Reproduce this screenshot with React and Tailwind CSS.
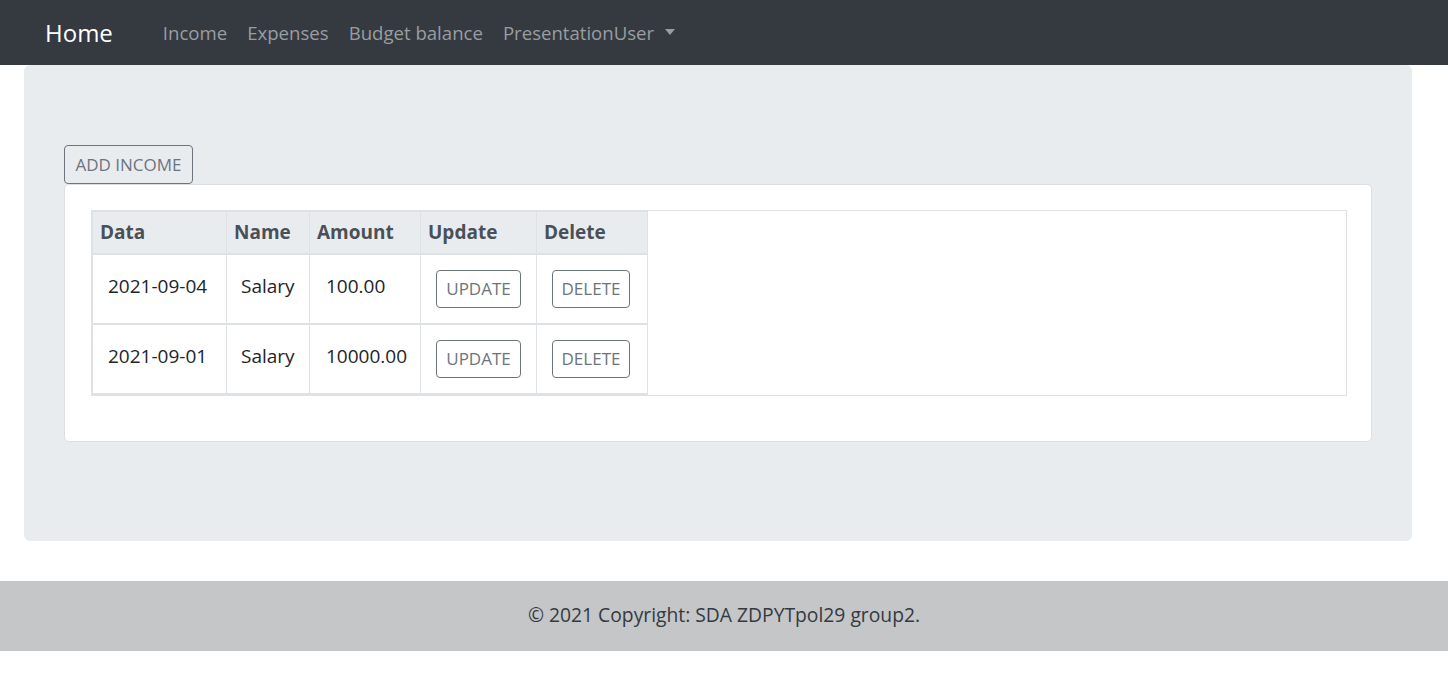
const rows = [
  { date: "2021-09-04", name: "Salary", amount: "100.00" },
  { date: "2021-09-01", name: "Salary", amount: "10000.00" },
];

const font = { fontFamily: "'Open Sans', 'Noto Sans', sans-serif" };

function Navbar() {
  return (
    <nav className="h-[65px] bg-[#343a40] flex items-center pl-[45px]">
      <a className="text-[24px] text-white mr-[50px]">Home</a>
      <div className="flex items-center gap-[20px] text-[18.6px] text-[#9a9da0]">
        <a>Income</a>
        <a>Expenses</a>
        <a>Budget balance</a>
        <a className="flex items-center gap-[11px]">
          PresentationUser
          <span className="w-0 h-0 border-l-[5px] border-r-[5px] border-t-[6px] border-l-transparent border-r-transparent border-t-[#9a9da0]" />
        </a>
      </div>
    </nav>
  );
}

function OutlineButton({ children, className = "" }) {
  return (
    <button
      className={`block whitespace-nowrap border border-[#6c757d] text-[#6c757d] rounded-[4px] text-[17px] ${className}`}
    >
      {children}
    </button>
  );
}

function IncomeTable() {
  const th = "text-left px-[7px] border border-[#dee2e6] border-b-2";
  const td = "align-top pt-[17px] border border-[#dee2e6] border-b-2";
  const tdBtn = "align-middle px-[15px] border border-[#dee2e6] border-b-2";
  return (
    <div className="border border-[#dee2e6]">
      <table className="table-fixed w-[555px] border-collapse text-[19px] text-[#212529]">
        <thead>
          <tr className="bg-[#e9ecef] text-[#495057] font-bold">
            <th className={`w-[134px] h-[42px] ${th}`}>Data</th>
            <th className={`w-[83px] ${th}`}>Name</th>
            <th className={`w-[111px] ${th}`}>Amount</th>
            <th className={`w-[116px] ${th}`}>Update</th>
            <th className={`w-[111px] ${th}`}>Delete</th>
          </tr>
        </thead>
        <tbody>
          {rows.map((r) => (
            <tr key={r.date} className="h-[70px]">
              <td className={`px-[15px] ${td}`}>{r.date}</td>
              <td className={`px-[14px] ${td}`}>{r.name}</td>
              <td className={`pl-[16px] pr-0 whitespace-nowrap ${td}`}>{r.amount}</td>
              <td className={tdBtn}>
                <OutlineButton className="h-[38px] w-[85px]">UPDATE</OutlineButton>
              </td>
              <td className={tdBtn}>
                <OutlineButton className="h-[38px] w-[78px]">DELETE</OutlineButton>
              </td>
            </tr>
          ))}
        </tbody>
      </table>
    </div>
  );
}

export default function App() {
  return (
    <div className="bg-white min-h-[690px]" style={font}>
      <Navbar />
      <main className="ml-[24px] w-[1388px] bg-[#e9ecef] rounded-[6px] pt-[80px] pb-[99px] px-[40px]">
        <OutlineButton className="h-[39px] w-[129px]">ADD INCOME</OutlineButton>
        <div className="bg-white border border-[#dfdfdf] rounded-[5px] pt-[25px] pb-[45px] pl-[26px] pr-[24px]">
          <IncomeTable />
        </div>
      </main>
      <footer className="mt-[40px] h-[70px] bg-[#c5c6c8] flex items-center justify-center text-[19.3px] text-[#343a40]">
        © 2021 Copyright: SDA ZDPYTpol29 group2.
      </footer>
    </div>
  );
}
